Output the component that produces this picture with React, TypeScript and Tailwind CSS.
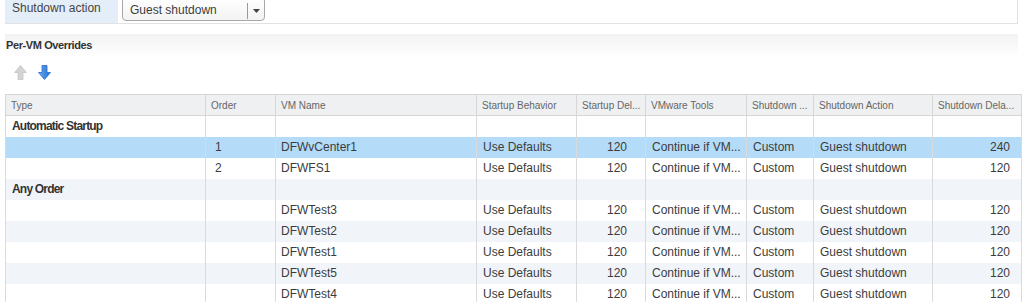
import React from "react";

type Row = {
    kind: "group" | "vm";
    label?: string;
    order?: string;
    name?: string;
    selected?: boolean;
};

const rows: Row[] = [
    { kind: "group", label: "Automatic Startup" },
    { kind: "vm", order: "1", name: "DFWvCenter1", selected: true },
    { kind: "vm", order: "2", name: "DFWFS1" },
    { kind: "group", label: "Any Order" },
    { kind: "vm", name: "DFWTest3" },
    { kind: "vm", name: "DFWTest2" },
    { kind: "vm", name: "DFWTest1" },
    { kind: "vm", name: "DFWTest5" },
    { kind: "vm", name: "DFWTest4" },
];

const headers = [
    "Type",
    "Order",
    "VM Name",
    "Startup Behavior",
    "Startup Del...",
    "VMware Tools",
    "Shutdown ...",
    "Shutdown Action",
    "Shutdown Dela...",
];

const widths = ["w-[200px]", "w-[70px]", "w-[201px]", "w-[100px]", "w-[69px]", "w-[101px]", "w-[67px]", "w-[119px]", "w-[89px]"];

function UpArrow() {
    return (
        <svg width="13" height="15" viewBox="0 0 13 15">
            <path d="M6.5 0.5 L12.5 7.5 L9 7.5 L9 14.5 L4 14.5 L4 7.5 L0.5 7.5 Z" fill="#d4d4d4" stroke="#c4c4c4" strokeWidth="0.8" />
        </svg>
    );
}

function DownArrow() {
    return (
        <svg width="13" height="15" viewBox="0 0 13 15">
            <defs>
                <linearGradient id="dn" x1="0" y1="0" x2="1" y2="0">
                    <stop offset="0" stopColor="#6aa8ee" />
                    <stop offset="1" stopColor="#2370d8" />
                </linearGradient>
            </defs>
            <path d="M6.5 14.5 L12.5 7.5 L9 7.5 L9 0.5 L4 0.5 L4 7.5 L0.5 7.5 Z" fill="url(#dn)" stroke="#2a6cc8" strokeWidth="0.8" />
        </svg>
    );
}

export default function App() {
    const cell = "border-x border-[#dadada] h-[21px] px-[6px] whitespace-nowrap overflow-hidden text-[12px] text-[#3c3c3c] p-0";

    return (
        <div className="w-[1024px] h-[302px] overflow-hidden bg-white" style={{ fontFamily: '"Liberation Sans", Arial, sans-serif' }}>

            {/* top setting row */}
            <div className="ml-[5px] w-[1013px] h-[24px] flex border-r border-b border-[#e2e2e2]">
                <div className="w-[113px] h-[23px] bg-[#e4eef8] text-[12px] text-[#444] pl-[7px] leading-[16px]">
                    Shutdown action
                </div>
                <div className="ml-[4px] -mt-[3px] h-[24px] w-[143px] flex items-center border border-[#a8a8a8] rounded-[4px] bg-gradient-to-b from-white to-[#f3f3f3]">
                    <span className="flex-1 pl-[7px] pt-[1px] text-[12px] text-[#3c3c3c]">Guest shutdown</span>
                    <span className="w-px h-[16px] mt-[3px] bg-[#999]" />
                    <span className="w-[16px] flex justify-center mt-[3px]">
                        <svg width="7" height="4" viewBox="0 0 7 4"><path d="M0 0 L7 0 L3.5 4 Z" fill="#444" /></svg>
                    </span>
                </div>
            </div>

            {/* section header */}
            <div className="ml-[5px] mt-[10px] w-[1013px] h-[23px] bg-gradient-to-b from-[#f2f2f2] to-white">
                <div className="pl-[1px] pt-[3px] text-[11px] font-bold text-[#333] tracking-[-0.4px]">Per-VM Overrides</div>
            </div>

            {/* move buttons */}
            <div className="flex gap-[11px] ml-[14px] mt-[8px] h-[15px]">
                <UpArrow />
                <DownArrow />
            </div>

            {/* overrides grid */}
            <table className="ml-[5px] mt-[14px] table-fixed border-collapse w-[1016px]">
                <colgroup>
                    {widths.map((w, i) => <col key={i} className={w} />)}
                </colgroup>
                <thead>
                    <tr>
                        {headers.map((h) => (
                            <th key={h} className="border border-[#d6d6d6] bg-[#eef0f2] h-[21px] px-[5px] p-0 text-left font-normal text-[10px] text-[#666] whitespace-nowrap overflow-hidden">
                                {h}
                            </th>
                        ))}
                    </tr>
                </thead>
                <tbody>
                    {rows.map((r, idx) => {
                        const bg = r.selected ? "bg-[#b4dbf8]" : idx % 2 === 1 ? "bg-[#f1f5fa]" : "bg-white";
                        if (r.kind === "group") {
                            return (
                                <tr key={idx} className={bg}>
                                    <td className={`${cell} font-bold text-[11px] tracking-[-0.8px] text-[#333]`}>{r.label}</td>
                                    {Array.from({ length: 8 }).map((_, i) => <td key={i} className={cell} />)}
                                </tr>
                            );
                        }
                        return (
                            <tr key={idx} className={bg}>
                                <td className={cell} />
                                <td className={`${cell} pl-[9px]`}>{r.order}</td>
                                <td className={`${cell} pl-[5px]`}>{r.name}</td>
                                <td className={cell}>Use Defaults</td>
                                <td className={`${cell} text-right pr-[18px]`}>120</td>
                                <td className={cell}>Continue if VM...</td>
                                <td className={cell}>Custom</td>
                                <td className={cell}>Guest shutdown</td>
                                <td className={`${cell} text-right pr-[11px]`}>{r.selected ? "240" : "120"}</td>
                            </tr>
                        );
                    })}
                </tbody>
            </table>
        </div>
    );
}
